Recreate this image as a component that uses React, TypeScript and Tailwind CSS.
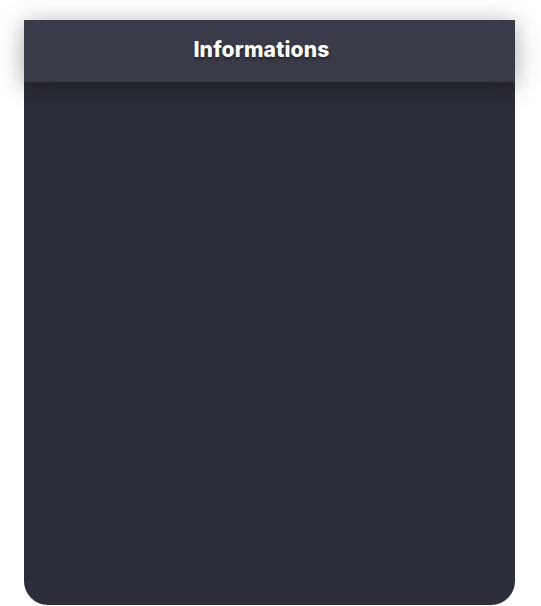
export default function App() {
  return (
    <div className="w-[541px] h-[606px] bg-white pt-5 pl-6 overflow-hidden">
      <div className="w-[491px] h-[585px] bg-[#2b2d38] rounded-b-[24px] flex flex-col">
        <header className="h-[62px] bg-[#393b48] flex items-center justify-center pr-4 pb-[2px] shadow-[0_4px_24px_rgba(0,0,0,0.35)] relative z-10">
          <h1 className="text-[21px] font-extrabold text-white tracking-[0.01em] [font-family:Inter,'Liberation_Sans',sans-serif] [text-shadow:0_2px_3px_rgba(0,0,0,0.45)]">
            Informations
          </h1>
        </header>
        <div className="flex-1" />
      </div>
    </div>
  );
}
